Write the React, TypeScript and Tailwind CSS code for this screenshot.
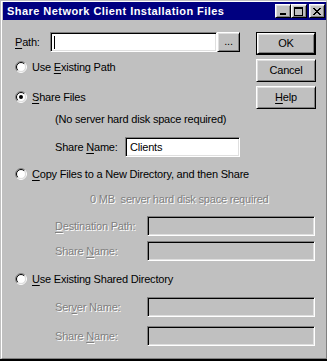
import React from 'react';

const sunken =
  'border border-t-[#808080] border-l-[#808080] border-b-white border-r-white shadow-[inset_1px_1px_0_#000,inset_-1px_-1px_0_#dfdfdf]';
const raised =
  'border border-t-white border-l-white border-b-black border-r-black shadow-[inset_1px_1px_0_#dfdfdf,inset_-1px_-1px_0_#808080]';

function Radio({ checked }: { checked?: boolean }) {
  const a = (r: number) => ({
    ll: `${6 - r * 0.7071} ${6 + r * 0.7071}`,
    ur: `${6 + r * 0.7071} ${6 - r * 0.7071}`,
  });
  const o = a(5.5);
  const i = a(4.5);
  return (
    <svg width="12" height="12" viewBox="0 0 12 12" className="shrink-0">
      <circle cx="6" cy="6" r="4.5" fill="#fff" />
      <path d={`M${o.ll} A5.5 5.5 0 0 1 ${o.ur}`} stroke="#808080" fill="none" />
      <path d={`M${o.ur} A5.5 5.5 0 0 1 ${o.ll}`} stroke="#fff" fill="none" />
      <path d={`M${i.ll} A4.5 4.5 0 0 1 ${i.ur}`} stroke="#000" fill="none" />
      <path d={`M${i.ur} A4.5 4.5 0 0 1 ${i.ll}`} stroke="#dfdfdf" fill="none" />
      {checked && <circle cx="6" cy="6" r="2" fill="#000" />}
    </svg>
  );
}

function U({ children }: { children: React.ReactNode }) {
  return <span className="underline underline-offset-[2px]">{children}</span>;
}

function Dis({ children, className = '' }: { children: React.ReactNode; className?: string }) {
  return <span className={`text-[#808080] [text-shadow:1px_1px_0_#fff] ${className}`}>{children}</span>;
}

function TitleButton({ kind }: { kind: 'min' | 'max' | 'close' }) {
  return (
    <div className={`w-[16px] h-[14px] bg-[#c0c0c0] ${raised} flex items-center justify-center`}>
      <svg width="10" height="9" viewBox="0 0 10 9">
        {kind === 'min' && <rect x="2" y="6" width="6" height="2" fill="#000" />}
        {kind === 'max' && (
          <>
            <rect x="0.5" y="0.5" width="8" height="8" fill="none" stroke="#000" />
            <rect x="0" y="0" width="9" height="2" fill="#000" />
          </>
        )}
        {kind === 'close' && (
          <path d="M1 1 L8 8 M2 1 L9 8 M8 1 L1 8 M9 1 L2 8" stroke="#000" strokeWidth="1" />
        )}
      </svg>
    </div>
  );
}

function Button({ children, isDefault }: { children: React.ReactNode; isDefault?: boolean }) {
  if (isDefault) {
    return (
      <div className="w-[60px] h-[23px] border border-black">
        <div className={`w-full h-full ${raised} flex items-center justify-center`}>{children}</div>
      </div>
    );
  }
  return <div className={`w-[60px] h-[23px] ${raised} flex items-center justify-center`}>{children}</div>;
}

export default function App() {
  return (
    <div
      className="w-[327px] h-[361px] bg-[#c0c0c0] overflow-hidden text-[11px] leading-[13px] tracking-[-0.2px] text-black flex flex-col"
      style={{ fontFamily: '"Liberation Sans", Arial, sans-serif' }}
    >
      <div className="h-[358px] w-[326px] shrink-0 ml-[1px] mt-[1px] border-l border-t border-white border-r border-r-[#808080] border-b border-b-[#808080] pl-[1px] flex flex-col">
        {/* title bar */}
        <div className="h-[18px] bg-[#000080] flex items-center pl-[4px] pr-[1px]">
          <span className="text-white font-bold text-[11px] tracking-[0.45px]">Share Network Client Installation Files</span>
          <div className="ml-auto flex items-center">
            <TitleButton kind="min" />
            <TitleButton kind="max" />
            <div className="w-[2px]" />
            <TitleButton kind="close" />
          </div>
        </div>

        <div className="pl-[12px] flex flex-col">
          {/* top section */}
          <div className="flex mt-[12px]">
            <div className="w-[241px] flex flex-col">
              <div className="flex items-center h-[20px]">
                <span className="w-[35px]">
                  <U>P</U>ath:
                </span>
                <div className={`w-[167px] h-[20px] bg-white ${sunken} flex items-center pl-[3px]`}>
                  <div className="w-[1px] h-[13px] bg-black" />
                </div>
                <div className={`w-[23px] h-[20px] ${raised} flex items-end justify-center pb-[3px]`}>...</div>
              </div>
              <div className="flex items-center h-[16px] mt-[7px] gap-[5px]">
                <Radio />
                <span>
                  Use <U>E</U>xisting Path
                </span>
              </div>
              <div className="flex items-center h-[16px] mt-[14px] gap-[5px]">
                <Radio checked />
                <span>
                  <U>S</U>hare Files
                </span>
              </div>
              <div className="flex items-center h-[16px] mt-[6px] ml-[40px]">(No server hard disk space required)</div>
              <div className="flex items-center h-[20px] mt-[10px] ml-[40px]">
                <span className="w-[70px]">
                  Share <U>N</U>ame:
                </span>
                <div className={`w-[115px] h-[20px] bg-white ${sunken} flex items-center pl-[4px]`}>Clients</div>
              </div>
            </div>
            <div className="flex flex-col">
              <Button isDefault>OK</Button>
              <div className="mt-[4px]">
                <Button>Cancel</Button>
              </div>
              <div className="mt-[4px]">
                <Button>
                  <span>
                    <U>H</U>elp
                  </span>
                </Button>
              </div>
            </div>
          </div>

          {/* copy section */}
          <div className="flex items-center h-[16px] mt-[9px] gap-[5px]">
            <Radio />
            <span>
              <U>C</U>opy Files to a New Directory, and then Share
            </span>
          </div>
          <div className="flex items-center h-[16px] mt-[9px] ml-[75px]">
            <Dis>0 MB&nbsp; server hard disk space required</Dis>
          </div>
          <div className="flex items-center h-[20px] mt-[9px] ml-[40px]">
            <Dis className="w-[92px]">
              <U>D</U>estination Path:
            </Dis>
            <div className={`w-[168px] h-[20px] ${sunken}`} />
          </div>
          <div className="flex items-center h-[20px] mt-[5px] ml-[40px]">
            <Dis className="w-[92px]">
              Share <U>N</U>ame:
            </Dis>
            <div className={`w-[168px] h-[20px] ${sunken}`} />
          </div>

          {/* existing shared dir */}
          <div className="flex items-center h-[16px] mt-[10px] gap-[5px]">
            <Radio />
            <span>
              <U>U</U>se Existing Shared Directory
            </span>
          </div>
          <div className="flex items-center h-[20px] mt-[10px] ml-[40px]">
            <Dis className="w-[92px]">
              Ser<U>v</U>er Name:
            </Dis>
            <div className={`w-[168px] h-[20px] ${sunken}`} />
          </div>
          <div className="flex items-center h-[20px] mt-[9px] ml-[40px]">
            <Dis className="w-[92px]">
              Share <U>N</U>ame:
            </Dis>
            <div className={`w-[168px] h-[20px] ${sunken}`} />
          </div>
        </div>
      </div>
      <div className="flex-1 bg-black" />
    </div>
  );
}
